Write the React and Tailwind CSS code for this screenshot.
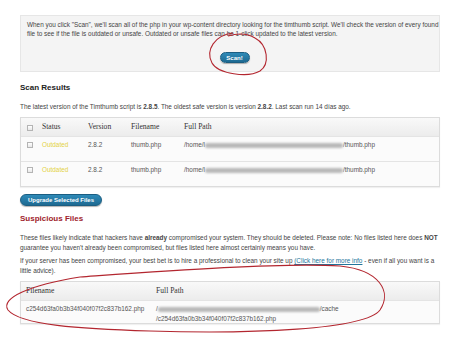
import React from "react";

const Check = () => (
  <span className="block w-[6px] h-[6px] border border-[#b4b4b4] bg-gradient-to-b from-white to-[#e8e8e8]" />
);

const Blob = ({ w, light }) => (
  <span
    className={
      "inline-block h-[5px] rounded-full blur-[1px] " +
      (light ? "bg-[#cfcfcf]" : "bg-[#b9b9b9]")
    }
    style={{ width: w }}
  />
);

const Btn = ({ children, className = "" }) => (
  <span
    className={
      "flex items-center justify-center rounded-full bg-gradient-to-b from-[#2e8ab8] to-[#1e6a92] border border-[#1b5e82] text-white font-bold text-[6px] leading-none shadow-[0_1px_1px_rgba(0,0,0,0.3)] " +
      className
    }
  >
    {children}
  </span>
);

function ResultRow() {
  return (
    <div className="flex h-[25px] pt-[4px] border-t border-[#e4e4e4] bg-[#fbfbfb] text-[6.4px] leading-[8px] text-[#555]">
      <div className="w-[21px] pl-[6px] pt-[1px]"><Check /></div>
      <div className="w-[46px] text-[#e3d244]">Outdated</div>
      <div className="w-[43px]">2.8.2</div>
      <div className="w-[53px]">thumb.php</div>
      <div className="flex items-center h-[8px]">
        <span>/home/l</span>
        <Blob w={138} />
        <span>/thumb.php</span>
      </div>
    </div>
  );
}

export default function App() {
  return (
    <div className="relative w-[460px] h-[352px] bg-white overflow-hidden font-['Liberation_Sans',Arial,sans-serif] text-[#333]">
      <div className="pt-[15px] px-[20px]">
        <div className="h-[57px] border border-[#e6e6e6] bg-[#f4f4f4] pl-[6px] pt-[4px] text-[6.4px] leading-[9px] text-[#444] whitespace-nowrap">
          When you click "Scan", we'll scan all of the php in your wp-content directory looking for the timthumb script. We'll check the version of every found
          <br />
          file to see if the file is outdated or unsafe. Outdated or unsafe files can be 1-click updated to the latest version.
          <div className="flex justify-center pt-[14px] pl-[3px]">
            <Btn className="w-[30px] h-[11px]">Scan!</Btn>
          </div>
        </div>
      </div>

      <div className="px-[20px]">
        <h2 className="pt-[11px] text-[8px] leading-[10px] font-bold text-[#222]">Scan Results</h2>
        <p className="pt-[9px] text-[6.4px] leading-[9px] text-[#444] whitespace-nowrap">
          The latest version of the Timthumb script is <b>2.8.5</b>. The oldest safe version is version <b>2.8.2</b>. Last scan run 14 días ago.
        </p>

        <div className="mt-[6px] border border-[#dcdcdc] shadow-[0_1px_1px_rgba(0,0,0,0.06)]">
          <div className="flex items-center h-[18px] bg-gradient-to-b from-[#f9f9f9] to-[#ececec] font-['Liberation_Serif',Georgia,serif] text-[7.6px] leading-none text-[#333]">
            <div className="w-[21px] pl-[6px] pt-[1px]"><Check /></div>
            <div className="w-[46px]">Status</div>
            <div className="w-[43px]">Version</div>
            <div className="w-[53px]">Filename</div>
            <div>Full Path</div>
          </div>
          <ResultRow />
          <ResultRow />
        </div>

        <div className="flex pt-[7px]">
          <Btn className="w-[82px] h-[12px]">Upgrade Selected Files</Btn>
        </div>

        <h2 className="pt-[8px] text-[8px] leading-[10px] font-bold text-[#a0222c]">Suspicious Files</h2>
        <p className="pt-[9px] text-[6.4px] leading-[10px] text-[#444] whitespace-nowrap">
          These files likely indicate that hackers have <b>already</b> compromised your system. They should be deleted. Please note: No files listed here does <b>NOT</b>
          <br />
          guarantee you haven't already been compromised, but files listed here almost certainly means you have.
        </p>
        <p className="pt-[3px] text-[6.4px] leading-[10px] text-[#444] whitespace-nowrap">
          If your server has been compromised, your best bet is to hire a professional to clean your site up{" "}
          <span className="text-[#21759b] underline">(Click here for more info</span> - even if all you want is a
          <br />
          little advice).
        </p>

        <div className="mt-[5px] border border-[#dcdcdc] shadow-[0_1px_1px_rgba(0,0,0,0.06)]">
          <div className="flex items-center h-[18px] bg-gradient-to-b from-[#f9f9f9] to-[#ececec] font-['Liberation_Serif',Georgia,serif] text-[7.6px] leading-none text-[#333]">
            <div className="w-[135px] pl-[5px]">Filename</div>
            <div>Full Path</div>
          </div>
          <div className="flex h-[23px] pt-[3px] border-t border-[#e4e4e4] bg-[#fbfbfb] text-[6.4px] leading-[10px] text-[#555]">
            <div className="w-[135px] pl-[5px]">c254d63fa0b3b34f040f07f2c837b162.php</div>
            <div>
              <div className="flex items-center h-[10px]">
                <span>/</span>
                <Blob w={162} />
                <span>/cache</span>
              </div>
              <div>/c254d63fa0b3b34f040f07f2c837b162.php</div>
            </div>
          </div>
        </div>
      </div>

      <svg className="absolute inset-0 pointer-events-none" width="460" height="352">
        <path
          d="M233 33 C215 35 205 50 212 63 C218 74 248 78 260 71 C270 64 268 45 255 38 C247 33 238 33 228 36"
          fill="none"
          stroke="#b3262f"
          strokeWidth="1.1"
        />
        <path
          d="M80 277 C150 272 280 262 340 266 C380 270 392 292 380 310 C365 330 250 334 150 331 C80 329 20 325 8 310 C0 298 30 285 80 277"
          fill="none"
          stroke="#b3262f"
          strokeWidth="1.1"
        />
      </svg>
    </div>
  );
}
